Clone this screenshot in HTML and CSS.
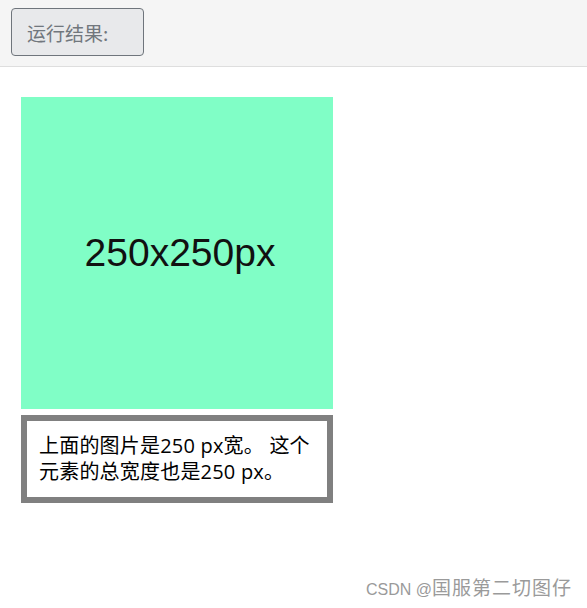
FILE: index.html
```html
<!DOCTYPE html>
<html lang="zh-CN">
<head>
    <meta charset="UTF-8">
    <meta name="viewport" content="width=device-width, initial-scale=1.0">
    <title>运行结果</title>
    <link rel="stylesheet" href="styles.css">
</head>
<body>

<div class="toolbar">
    <button class="btn-result">运行结果:</button>
</div>

<div class="content">
    <div class="placeholder">250x250px</div>
    <div class="box">上面的图片是250 px宽。 这个元素的总宽度也是250 px。</div>
</div>

<div class="watermark">CSDN @<span class="name">国服第二切图仔</span></div>

</body>
</html>
```

FILE: styles.css
```css
* {
    margin: 0;
    padding: 0;
    box-sizing: border-box;
}

body {
    width: 587px;
    height: 608px;
    position: relative;
    background: #fff;
    font-family: "Open Sans", "Noto Sans CJK SC", sans-serif;
    overflow: hidden;
}

.toolbar {
    height: 67px;
    background: #f5f5f5;
    border-bottom: 1px solid #dedede;
    padding: 8px 11px;
}

.btn-result {
    width: 133px;
    height: 48px;
    background: #e8e9eb;
    border: 1px solid #6f757c;
    border-radius: 4px;
    color: #71777d;
    font-family: "Noto Sans CJK SC", sans-serif;
    font-size: 19px;
    text-align: left;
    padding-left: 15px;
}

.content {
    padding: 30px 21px;
}

.placeholder {
    width: 312px;
    height: 312px;
    background: #80fec6;
    color: #111;
    font-family: "Liberation Sans", Arial, sans-serif;
    font-size: 39px;
    padding-left: 6px;
    display: flex;
    align-items: center;
    justify-content: center;
}

.box {
    width: 312px;
    margin-top: 6px;
    border: 6px solid #808080;
    padding: 12px 12px;
    font-size: 20px;
    line-height: 26px;
    letter-spacing: 0.2px;
    color: #000;
}

.watermark {
    position: absolute;
    right: 15px;
    bottom: 8px;
    color: #9a9a9a;
    font-family: "Liberation Sans", Arial, sans-serif;
    font-size: 16px;
}

.watermark .name {
    font-family: "Noto Sans CJK SC", sans-serif;
    font-size: 19px;
    letter-spacing: 1px;
}
```
